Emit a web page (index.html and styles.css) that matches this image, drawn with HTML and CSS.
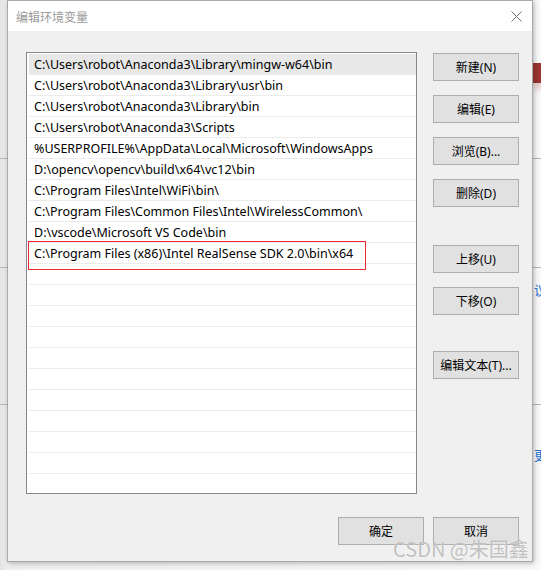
FILE: index.html
```html
<!DOCTYPE html>
<html lang="zh-CN">

<head>
    <meta charset="UTF-8">
    <meta name="viewport" content="width=device-width, initial-scale=1.0">
    <title>编辑环境变量</title>
    <link rel="stylesheet" href="styles.css">
</head>

<body>
    <!-- settings window peeking out behind the dialog -->
    <div class="backdrop">
        <div class="bg-line line-a"></div>
        <div class="bg-line line-b"></div>
        <div class="bg-line line-c"></div>
        <div class="bg-badge"></div>
        <div class="bg-link link-a">议</div>
        <div class="bg-link link-b">更</div>
    </div>

    <div class="dialog">
        <div class="titlebar">
            <span class="title">编辑环境变量</span>
            <span class="close">
                <svg width="11" height="11" viewBox="0 0 11 11">
                    <path d="M0.5 0.5 L10.5 10.5 M10.5 0.5 L0.5 10.5" stroke="#6e6e6e" stroke-width="1" fill="none"/>
                </svg>
            </span>
        </div>

        <div class="content">
            <div class="main">
                <div class="path-list">
                    <div class="row selected">C:\Users\robot\Anaconda3\Library\mingw-w64\bin</div>
                    <div class="row">C:\Users\robot\Anaconda3\Library\usr\bin</div>
                    <div class="row">C:\Users\robot\Anaconda3\Library\bin</div>
                    <div class="row">C:\Users\robot\Anaconda3\Scripts</div>
                    <div class="row">%USERPROFILE%\AppData\Local\Microsoft\WindowsApps</div>
                    <div class="row">D:\opencv\opencv\build\x64\vc12\bin</div>
                    <div class="row">C:\Program Files\Intel\WiFi\bin\</div>
                    <div class="row">C:\Program Files\Common Files\Intel\WirelessCommon\</div>
                    <div class="row">D:\vscode\Microsoft VS Code\bin</div>
                    <div class="row">C:\Program Files (x86)\Intel RealSense SDK 2.0\bin\x64</div>
                    <div class="row"></div>
                    <div class="row"></div>
                    <div class="row"></div>
                    <div class="row"></div>
                    <div class="row"></div>
                    <div class="row"></div>
                    <div class="row"></div>
                    <div class="row"></div>
                    <div class="row"></div>
                    <div class="row"></div>
                    <div class="row"></div>
                    <div class="mark"></div>
                </div>

                <div class="actions">
                    <div class="group">
                        <button class="btn">新建(N)</button>
                        <button class="btn">编辑(E)</button>
                        <button class="btn">浏览(B)...</button>
                        <button class="btn">删除(D)</button>
                    </div>
                    <div class="group move">
                        <button class="btn">上移(U)</button>
                        <button class="btn">下移(O)</button>
                    </div>
                    <div class="group text-edit">
                        <button class="btn">编辑文本(T)...</button>
                    </div>
                </div>
            </div>

            <div class="footer">
                <button class="btn">确定</button>
                <button class="btn">取消</button>
            </div>
        </div>
    </div>

    <div class="watermark">CSDN @朱国鑫</div>
</body>

</html>
```

FILE: styles.css
```css
body {
    margin: 0;
    width: 541px;
    height: 570px;
    overflow: hidden;
    position: relative;
    background: linear-gradient(to right, #e4e4e4, #eeeeee 7px, #f7f7f7 534px, #fafafa);
    font-family: "Noto Sans", "Noto Sans CJK SC", sans-serif;
    font-size: 12px;
    color: #000;
}

/* window behind */
.backdrop {
    position: absolute;
    inset: 0;
    overflow: hidden;
}

.bg-line {
    position: absolute;
    left: 0;
    right: 0;
    height: 1px;
    background: #b4b4b4;
}

.line-a { top: 158px; }
.line-b { top: 267px; }
.line-c { top: 404px; }

.bg-badge {
    position: absolute;
    left: 533px;
    top: 63px;
    width: 10px;
    height: 20px;
    background: #9a3530;
    box-shadow: 0 6px 6px rgba(154, 53, 48, 0.25);
}

.bg-link {
    position: absolute;
    left: 534px;
    color: #1a6fd0;
    font-size: 13px;
    line-height: 14px;
}

.link-a { top: 283px; }
.link-b { top: 448px; }

/* dialog */
.dialog {
    position: relative;
    margin-left: 7px;
    width: 524px;
    height: 560px;
    border: 1px solid #a9a9a9;
    background: #f0f0f0;
    box-shadow: 1px 1px 5px rgba(0, 0, 0, 0.28);
    display: flex;
    flex-direction: column;
}

.titlebar {
    height: 30px;
    background: #fff;
    display: flex;
    align-items: center;
    justify-content: space-between;
    padding: 0 10px 0 8px;
}

.title {
    color: #9a9a9a;
    font-family: "Noto Sans CJK SC", sans-serif;
    font-size: 12px;
}

.close {
    display: flex;
    width: 11px;
    height: 11px;
}

.content {
    flex: 1;
    display: flex;
    flex-direction: column;
    padding: 21px 13px 0 18px;
}

.main {
    display: flex;
    gap: 16px;
}

.path-list {
    position: relative;
    width: 388px;
    height: 438px;
    border: 1px solid #828790;
    background: #fff;
    padding: 1px 0 1px 2px;
    overflow: hidden;
}

.row {
    height: 20px;
    line-height: 21px;
    padding-left: 5px;
    border-bottom: 1px solid #ebebeb;
    white-space: nowrap;
    font-size: 12.5px;
}

.row.selected {
    background: #e8e8e8;
}

/* red outline drawn over the new entry */
.mark {
    position: absolute;
    left: 1px;
    top: 188px;
    width: 336px;
    height: 27px;
    border: 1px solid #ee2a2f;
}

.actions {
    display: flex;
    flex-direction: column;
    padding-top: 1px;
}

.group {
    display: flex;
    flex-direction: column;
    gap: 14px;
}

.group.move {
    margin-top: 38px;
}

.group.text-edit {
    margin-top: 36px;
}

.btn {
    width: 86px;
    height: 28px;
    border: 1px solid #adadad;
    background: #e1e1e1;
    font-family: "Noto Sans", "Noto Sans CJK SC", sans-serif;
    font-size: 12px;
    color: #000;
    padding: 0;
}

.footer {
    display: flex;
    justify-content: flex-end;
    gap: 9px;
    margin-top: 23px;
}

.watermark {
    position: absolute;
    left: 393px;
    top: 535px;
    font-family: "Noto Sans CJK SC", sans-serif;
    font-size: 20px;
    line-height: 28px;
    color: rgba(175, 175, 175, 0.8);
    text-shadow: 0 0 1px #fff;
    white-space: nowrap;
}
```
